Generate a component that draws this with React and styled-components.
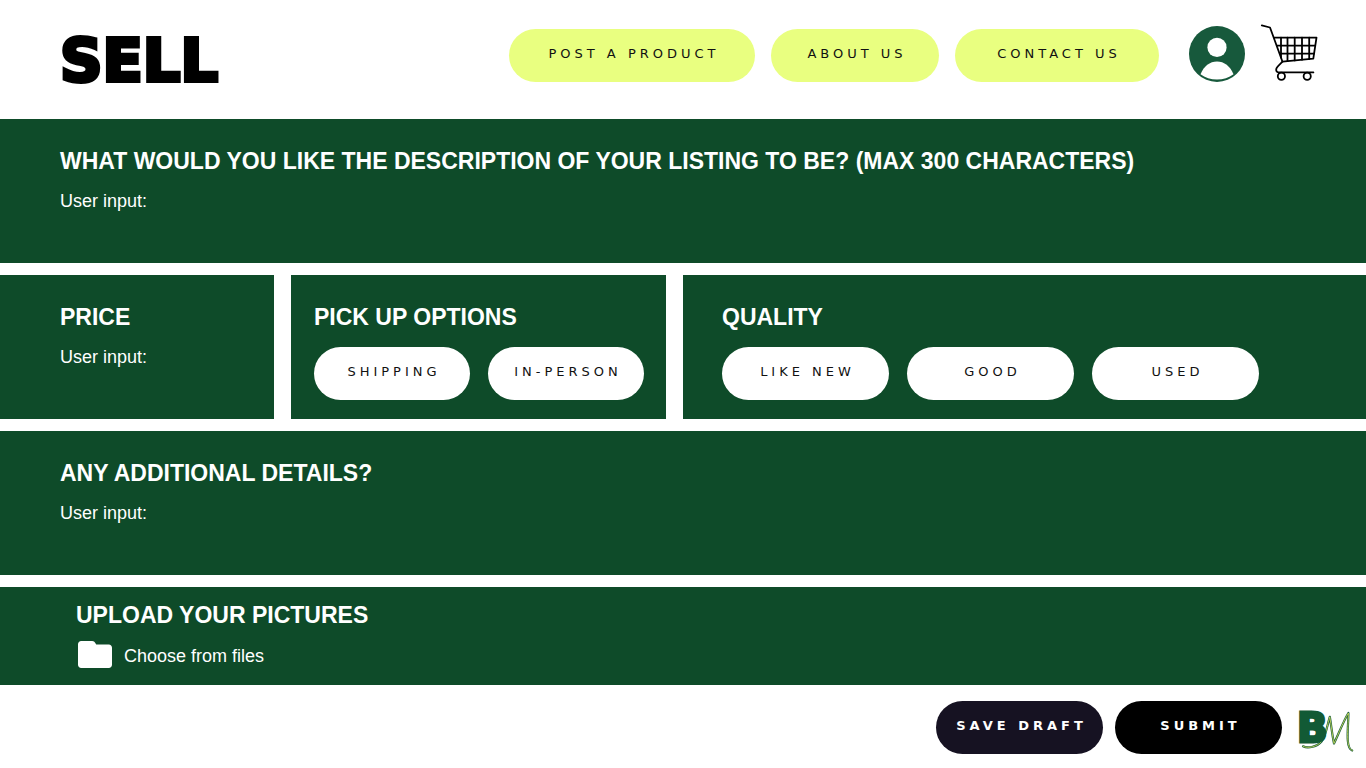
import React from "react";
import styled, { createGlobalStyle } from "styled-components";

const GlobalStyle = createGlobalStyle`
  *, *::before, *::after { box-sizing: border-box; }
  body { margin: 0; background: #fff; color: #000; font-family: "Liberation Sans", Arial, sans-serif; }
  h1, h2 { margin: 0; }
`;

const Page = styled.div`
  display: flex;
  flex-direction: column;
  min-height: 100vh;
`;

const Header = styled.header`
  display: flex;
  align-items: flex-end;
  justify-content: space-between;
  padding: 26px 49px 37px 60px;
`;

const Wordmark = styled.h1`
  font-family: "DejaVu Sans", sans-serif;
  font-weight: 700;
  font-size: 59px;
  line-height: 42px;
  -webkit-text-stroke: 4px #000;
`;

const HeaderActions = styled.div`
  display: flex;
  align-items: flex-end;
  gap: 30px;
`;

const Nav = styled.nav`
  display: flex;
  gap: 16px;
`;

const IconGroup = styled.div`
  display: flex;
  align-items: center;
  gap: 16px;
`;

const IconButton = styled.button`
  display: block;
  width: 56px;
  height: 56px;
  padding: 0;
  border: 0;
  background: none;
  cursor: pointer;

  svg { display: block; overflow: visible; }
`;

const tones = {
  lime: "background: #e9ff80; color: #111;",
  white: "background: #fff; color: #111;",
  ink: "background: #161222; color: #fff;",
  black: "background: #000; color: #fff;",
};

const Pill = styled.button`
  ${({ $tone }) => tones[$tone]}
  width: ${({ $width }) => $width}px;
  height: 53px;
  padding: 0 0 3px;
  border: 0;
  border-radius: 27px;
  font-family: "DejaVu Sans", sans-serif;
  font-weight: ${({ $strong }) => ($strong ? 700 : 400)};
  font-size: 13px;
  line-height: 20px;
  letter-spacing: 4px;
  text-indent: 4px;
  text-transform: uppercase;
  text-decoration: none;
  white-space: nowrap;
  display: flex;
  align-items: center;
  justify-content: center;
  cursor: pointer;
`;

const Form = styled.form`
  display: flex;
  flex-direction: column;
  flex: 1;
`;

const Sections = styled.div`
  display: grid;
  gap: 12px;
`;

const Panel = styled.section`
  background: #0e4b29;
  color: #fff;
  min-width: 0;
  min-height: ${({ $short }) => ($short ? 98 : 144)}px;
  padding: ${({ $short }) => ($short ? 14 : 28)}px 20px 0 ${({ $inset }) => $inset}px;
`;

const PanelRow = styled.div`
  display: grid;
  grid-template-columns: minmax(0, 274fr) minmax(0, 375fr) minmax(0, 683fr);
  gap: 17px;
`;

const Title = styled.h2`
  font-size: 23px;
  line-height: 28px;
  font-weight: 700;
`;

const Field = styled.label`
  display: flex;
  align-items: flex-start;
  gap: 8px;
  margin-top: 14px;
  font-size: 18px;
  line-height: 24px;
  white-space: nowrap;
`;

const fieldBox = `
  flex: 1;
  min-width: 0;
  padding: 0;
  border: 0;
  outline: 0;
  resize: none;
  background: transparent;
  color: inherit;
  font: inherit;
`;

const TextInput = styled.input`${fieldBox}`;
const TextArea = styled.textarea`
  ${fieldBox}
  height: 48px;
`;

const Options = styled.div`
  display: flex;
  gap: 18px;
  margin-top: 16px;
`;

const Upload = styled.label`
  display: flex;
  width: fit-content;
  align-items: flex-start;
  gap: 12px;
  margin: 12px 0 0 2px;
  font-size: 18px;
  line-height: 30px;
  cursor: pointer;

  input {
    position: absolute;
    width: 1px;
    height: 1px;
    opacity: 0;
  }
`;

const Footer = styled.footer`
  display: flex;
  align-items: flex-start;
  justify-content: flex-end;
  gap: 12px;
  padding: 16px 12px 14px 24px;
`;

const BrandLink = styled.a`
  display: block;
  margin: 10px 0 0 4px;

  svg { display: block; overflow: visible; }
`;

const LogoLetter = styled.text`
  fill: #125a35;
  stroke: #125a35;
  stroke-width: 3px;
  font-family: "DejaVu Sans", sans-serif;
  font-weight: 700;
  font-size: 40px;
`;

const AvatarIcon = () => (
  <svg width="56" height="56" viewBox="0 0 56 56" aria-hidden="true">
    <circle cx="28" cy="28" r="28" fill="#17593c" />
    <circle cx="28" cy="21.4" r="9.6" fill="#fff" />
    <path d="M11.5 48.2C14.8 40 20.8 35.4 28 35.4S41.2 40 44.5 48.2C40 51.8 34.2 53.6 28 53.6S16 51.8 11.5 48.2Z" fill="#fff" />
  </svg>
);

const CartIcon = () => (
  <svg width="56" height="56" viewBox="0 1 56 56" fill="none" stroke="#000" strokeWidth="1.8" strokeLinejoin="round" strokeLinecap="round" aria-hidden="true">
    <path d="M.8.4 9 2.5 21.5 36.7 52.3 33.6 55.5 12.6H13" />
    <path d="M20 12.6V32.5M26.5 12.6V36M33.7 12.6V35.4M41 12.6V34.7M48.2 12.6V34M16.2 20.6H54.2M19 28.6H53" />
    <path d="M21.5 36.7C19 39.5 15.5 41.6 15.2 44.4 15 46.2 16 47.4 18.3 47.4H52.4" />
    <circle cx="20.4" cy="51.3" r="3.6" />
    <circle cx="46.2" cy="51.3" r="3.6" />
  </svg>
);

const FolderIcon = () => (
  <svg width="34" height="27" viewBox="0 0 34 27" fill="#fff" aria-hidden="true">
    <path d="M3.2 0H14.2C15.6 0 16.7.8 17.3 2L18.2 3.6H30.8C32.6 3.6 34 5 34 6.8V23.8C34 25.6 32.6 27 30.8 27H3.2C1.4 27 0 25.6 0 23.8V3.2C0 1.4 1.4 0 3.2 0Z" />
  </svg>
);

const scriptStroke = "M5 35.3C10 38 19.5 35.5 23.5 30.5 28 24.5 29.5 13 31.8 5.8 33.2 14 34.2 24 36 32.5 40.5 23 45.5 10 50.4 2 50.6 14 46.8 37 54.2 39.5";

const BrandLogo = () => (
  <svg width="56" height="42" viewBox="0 0 56 42" role="img" aria-label="BM">
    <path d={scriptStroke} fill="none" stroke="#1b5d3c" strokeWidth="2.2" strokeLinecap="round" strokeLinejoin="round" />
    <path d={scriptStroke} fill="none" stroke="#c3d75a" strokeWidth=".9" strokeLinecap="round" strokeLinejoin="round" />
    <LogoLetter x="-1" y="30.5">B</LogoLetter>
  </svg>
);

const navItems = [
  { label: "Post a product", width: 246 },
  { label: "About us", width: 168 },
  { label: "Contact us", width: 204 },
];

export default function App() {
  return (
    <Page>
      <GlobalStyle />
      <Header>
        <Wordmark>SELL</Wordmark>
        <HeaderActions>
          <Nav>
            {navItems.map(({ label, width }) => (
              <Pill as="a" href="#" key={label} $tone="lime" $width={width}>{label}</Pill>
            ))}
          </Nav>
          <IconGroup>
            <IconButton type="button" aria-label="Account"><AvatarIcon /></IconButton>
            <IconButton type="button" aria-label="Cart"><CartIcon /></IconButton>
          </IconGroup>
        </HeaderActions>
      </Header>

      <Form onSubmit={(event) => event.preventDefault()}>
        <Sections>
          <Panel $inset={60}>
            <Title>WHAT WOULD YOU LIKE THE DESCRIPTION OF YOUR LISTING TO BE? (MAX 300 CHARACTERS)</Title>
            <Field>
              User input:
              <TextArea name="description" maxLength={300} />
            </Field>
          </Panel>

          <PanelRow>
            <Panel $inset={60}>
              <Title>PRICE</Title>
              <Field>
                User input:
                <TextInput name="price" type="text" />
              </Field>
            </Panel>
            <Panel $inset={23}>
              <Title>PICK UP OPTIONS</Title>
              <Options>
                <Pill type="button" $tone="white" $width={156}>Shipping</Pill>
                <Pill type="button" $tone="white" $width={156}>In-person</Pill>
              </Options>
            </Panel>
            <Panel $inset={39}>
              <Title>QUALITY</Title>
              <Options>
                <Pill type="button" $tone="white" $width={167}>Like new</Pill>
                <Pill type="button" $tone="white" $width={167}>Good</Pill>
                <Pill type="button" $tone="white" $width={167}>Used</Pill>
              </Options>
            </Panel>
          </PanelRow>

          <Panel $inset={60}>
            <Title>ANY ADDITIONAL DETAILS?</Title>
            <Field>
              User input:
              <TextArea name="details" />
            </Field>
          </Panel>

          <Panel $inset={76} $short>
            <Title>UPLOAD YOUR PICTURES</Title>
            <Upload>
              <input type="file" name="pictures" multiple />
              <FolderIcon />
              Choose from files
            </Upload>
          </Panel>
        </Sections>

        <Footer>
          <Pill type="button" $tone="ink" $width={167} $strong>Save draft</Pill>
          <Pill type="submit" $tone="black" $width={167} $strong>Submit</Pill>
          <BrandLink href="#"><BrandLogo /></BrandLink>
        </Footer>
      </Form>
    </Page>
  );
}
